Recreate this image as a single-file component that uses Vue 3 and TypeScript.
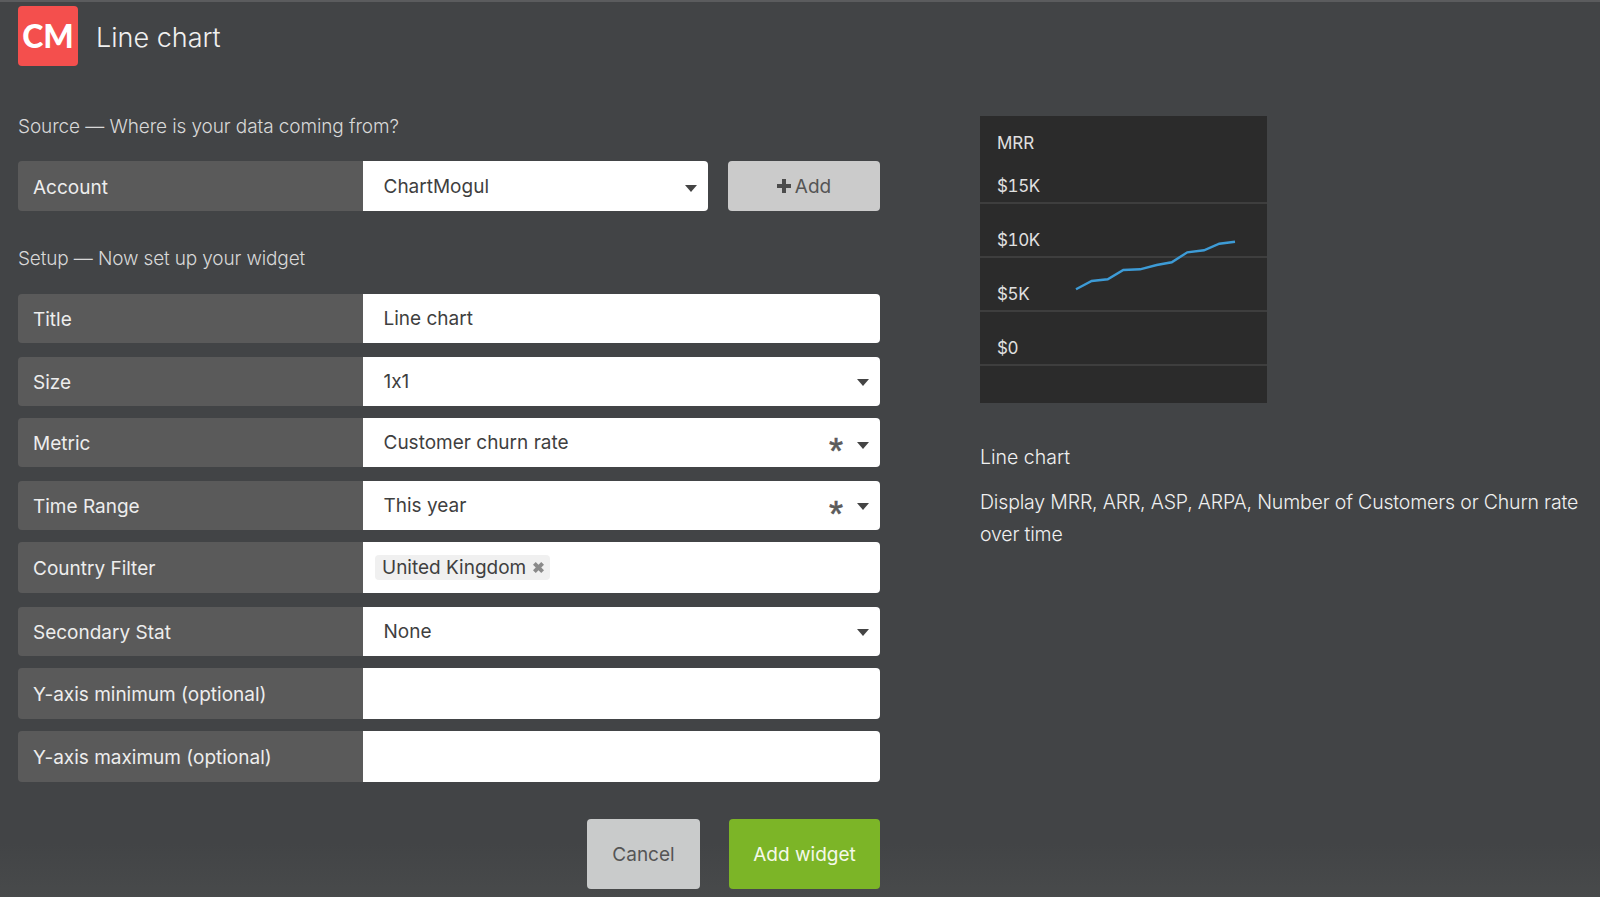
<script setup lang="ts">
interface Row { label: string; value?: string; arrow?: boolean; star?: boolean; low?: boolean; tag?: string; h: number; gap: number }
const rows: Row[] = [
  { label: 'Title', value: 'Line chart', h: 49, gap: 0 },
  { label: 'Size', value: '1x1', arrow: true, h: 49, gap: 14 },
  { label: 'Metric', value: 'Customer churn rate', arrow: true, star: true, low: true, h: 49, gap: 12 },
  { label: 'Time Range', value: 'This year', arrow: true, star: true, h: 49, gap: 14 },
  { label: 'Country Filter', tag: 'United Kingdom', h: 51, gap: 12 },
  { label: 'Secondary Stat', value: 'None', arrow: true, h: 49, gap: 14 },
  { label: 'Y-axis minimum (optional)', h: 51, gap: 12 },
  { label: 'Y-axis maximum (optional)', h: 51, gap: 12 },
]
const ticks = ['$15K', '$10K', '$5K', '$0']
</script>

<template>
  <div class="page">
    <div class="form-col">
      <header class="head">
        <div class="logo">CM</div>
        <h1 class="title">Line chart</h1>
      </header>
      <p class="section source">Source — Where is your data coming from?</p>
      <div class="account-line">
        <div class="row account">
          <div class="label">Account</div>
          <div class="field">
            <span>ChartMogul</span>
            <i class="caret account-caret"></i>
          </div>
        </div>
        <button class="btn-add"><svg class="plus" viewBox="0 0 14 14"><path d="M5 0h4v5h5v4H9v5H5V9H0V5h5z" /></svg>Add</button>
      </div>
      <p class="section setup">Setup — Now set up your widget</p>
      <div class="rows">
        <div
          v-for="r in rows"
          :key="r.label"
          class="row"
          :style="{ height: r.h + 'px', marginTop: r.gap + 'px' }"
        >
          <div class="label">{{ r.label }}</div>
          <div class="field">
            <span v-if="r.value">{{ r.value }}</span>
            <span v-if="r.tag" class="tag">{{ r.tag }}<svg class="tag-x" viewBox="0 0 10 10"><path d="M0 2.500 2.500 0 5 2.500 7.500 0 10 2.500 7.500 5 10 7.500 7.500 10 5 7.500 2.500 10 0 7.500 2.500 5z" /></svg></span>
            <span v-if="r.star" class="star">*</span>
            <i v-if="r.arrow" class="caret" :class="{ 'caret-low': r.low }"></i>
          </div>
        </div>
      </div>
      <div class="actions">
        <button class="btn-cancel">Cancel</button>
        <button class="btn-save">Add widget</button>
      </div>
    </div>
    <aside class="side">
      <div class="chart">
        <div class="chart-name">MRR</div>
        <div v-for="t in ticks" :key="t" class="tick">{{ t }}</div>
        <svg class="spark" viewBox="0 0 160 50"><polyline points="0,47.300 15.700,39 31.700,37.300 47.300,28 64,27.300 80.700,23 95.700,20.300 111.300,10.300 128,8.300 143.300,1.700 159,-0.300" /></svg>
      </div>
      <p class="side-title">Line chart</p>
      <p class="side-text">Display MRR, ARR, ASP, ARPA, Number of Customers or Churn rate over time</p>
    </aside>
  </div>
</template>

<style scoped>
.page {
  position: relative;
  box-sizing: border-box;
  width: 1600px;
  height: 897px;
  overflow: hidden;
  display: flex;
  padding: 4px 0 0 18px;
  background: linear-gradient(#424446, #424446 94%, #484a4b);
  border-top: 2px solid #5b5c5e;
  font-family: Inter, "Liberation Sans", sans-serif;
  font-feature-settings: "calt" 0;
  color: #e4e4e4;
}
.form-col { width: 862px; flex: none; }
.head { display: flex; align-items: center; height: 60px; }
.logo {
  width: 60px; height: 60px; border-radius: 4px; background: #f44f4d; color: #fff;
  font: 900 32px/60px Lato, sans-serif; text-align: center;
}
.title { margin: 2px 0 0 18px; font-size: 27px; font-weight: 300; color: #f0f0f0; }
.section { margin: 0; font-size: 19px; font-weight: 300; line-height: 24px; color: #d8d8d8; }
.source { margin-top: 49px; letter-spacing: -0.1px; }
.setup { margin-top: 36px; letter-spacing: -0.14px; }
.account-line { display: flex; justify-content: space-between; margin-top: 22px; }
.row { display: flex; height: 50px; }
.account { width: 690px; }
.rows { margin-top: 23px; }
.label {
  width: 345px; flex: none; box-sizing: border-box; padding: 2px 0 0 15px; background: #5a5a5a;
  border-radius: 4px 0 0 4px;
  display: flex; align-items: center; font-size: 19px; font-weight: 400; color: #ededed;
}
.field {
  position: relative; flex: 1; background: #fff; display: flex; align-items: center;
  border-radius: 0 4px 4px 0;
  padding: 0 0 0 20.500px; font-size: 19px; color: #3f3f3f;
}
.caret {
  position: absolute; right: 11px; top: 22px; width: 0; height: 0;
  border-left: 6px solid transparent; border-right: 6px solid transparent; border-top: 7px solid #444;
}
.caret-low { top: 24px; }
.account-caret { top: 24px; }
.star {
  position: absolute; right: 37px; top: 16px;
  font: 400 36px/36px "Liberation Sans", sans-serif; color: #5b5b5b;
  -webkit-text-stroke: 0.6px #5b5b5b;
}
.tag {
  margin-left: -8.500px; padding: 0 0 0 7px; height: 25px; width: 175px; box-sizing: border-box; display: flex; align-items: center;
  position: relative; background: #f0f0f0; border-radius: 4px;
}
.tag-x { position: absolute; right: 6px; top: 7px; width: 11px; height: 11px; fill: #8a8a8a; }
.btn-add {
  width: 152px; height: 50px; border: 0; border-radius: 4px; background: #cbcbcb; color: #555;
  font: 400 19px Inter, "Liberation Sans", sans-serif; display: flex; align-items: center; justify-content: center; gap: 4px;
}
.plus { width: 14px; height: 14px; fill: #4c4c4c; }
.actions { display: flex; justify-content: flex-end; gap: 29px; margin-top: 37px; }
.btn-cancel, .btn-save {
  height: 70px; border: 0; border-radius: 4px; font: 400 19px Inter, "Liberation Sans", sans-serif;
}
.btn-cancel { width: 113px; background: #c9cbcb; color: #555; }
.btn-save { width: 151px; background: #7cb527; color: #f4f9ea; }
.side { margin-left: 100px; width: 610px; padding-top: 110px; }
.chart {
  position: relative; width: 287px; height: 287px; box-sizing: border-box; background: #2b2b2b;
  padding: 0 0 0 17px; font-size: 17px; color: #e0e0e0;
}
.chart-name { height: 33px; padding-top: 16px; line-height: 22px; box-sizing: content-box; }
.tick {
  margin-left: -17px; padding: 0 0 6px 17px; height: 54px; box-sizing: border-box;
  display: flex; align-items: flex-end; border-bottom: 2px solid #3e3e3e;
  font-variant-numeric: tabular-nums; letter-spacing: -0.4px;
}
.chart-name + .tick { height: 39px; }
.spark { position: absolute; left: 96px; top: 126px; width: 160px; height: 50px; overflow: visible; fill: none; stroke: #3d9bd6; stroke-width: 2.400; }
.side-title { margin: 42px 0 0; font-size: 19.500px; font-weight: 300; line-height: 24px; color: #f0f0f0; }
.side-text { margin: 17px 0 0; font-size: 19.500px; font-weight: 300; line-height: 32px; letter-spacing: -0.17px; color: #f0f0f0; }
</style>

<style>
html, body { margin: 0; background: #424446; }
</style>
